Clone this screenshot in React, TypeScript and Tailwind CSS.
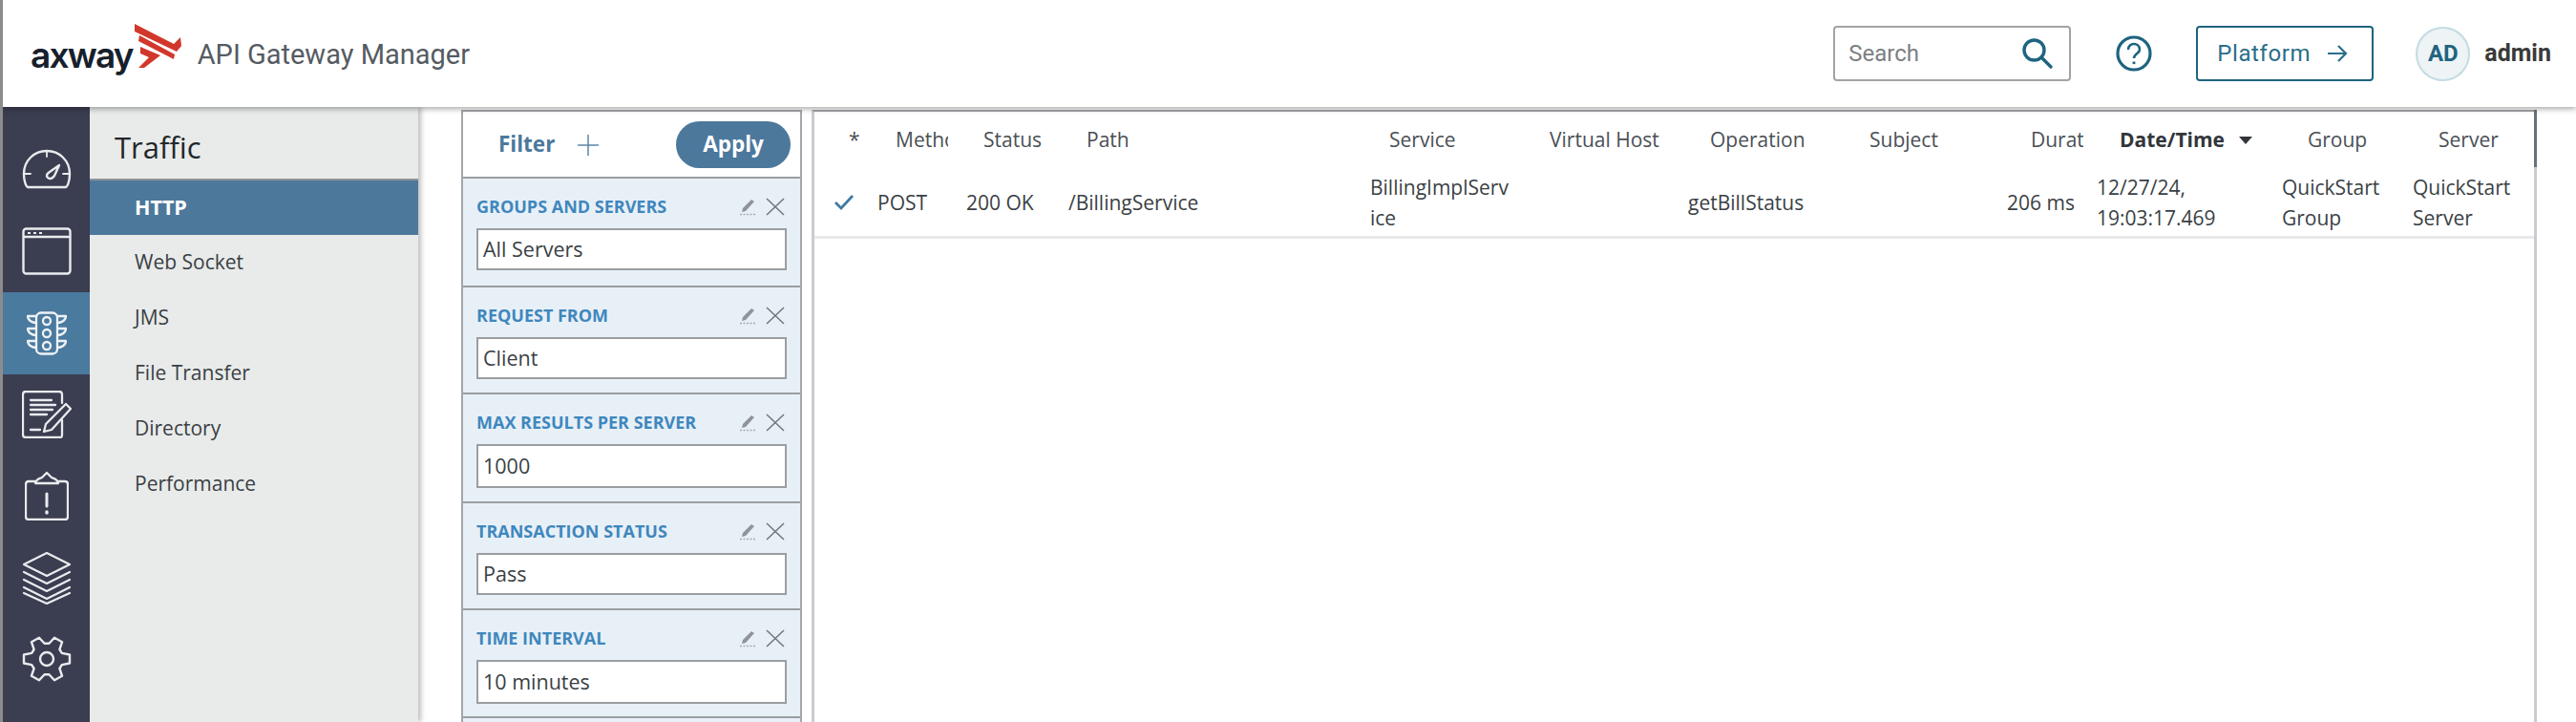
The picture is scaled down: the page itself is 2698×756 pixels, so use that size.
import React from "react";

const open = "font-['Open_Sans',sans-serif]";

function Gauge() {
  return (
    <svg width="52" height="42" viewBox="0 0 52 42" fill="none" stroke="#e9ebee" strokeWidth="2.4" strokeLinecap="round" strokeLinejoin="round">
      <path d="M6 40h40c2-1 4-7 4-14C50 12 39 2 26 2S2 12 2 26c0 7 2 13 4 14z" />
      <path d="M26 2v6M2 26h7M43 26h7" strokeWidth="1.8" />
      <path d="M39 17l-5 11c-2 3-5 4-7 2s-1-4 2-6z" />
    </svg>
  );
}
function Win() {
  return (
    <svg width="52" height="50" viewBox="0 0 52 50" fill="none" stroke="#e9ebee" strokeWidth="2.4" strokeLinejoin="round">
      <rect x="1.5" y="1.5" width="49" height="47" rx="3" />
      <path d="M2 10h48" />
      <path d="M6 6h3M12 6h3M18 6h3" strokeWidth="2" />
    </svg>
  );
}
function Light() {
  return (
    <svg width="42" height="46" viewBox="0 0 42 46" fill="none" stroke="#eef2f5" strokeWidth="2.3" strokeLinejoin="round">
      <rect x="10" y="1.5" width="22" height="43" rx="5" />
      <circle cx="21" cy="10" r="4" />
      <circle cx="21" cy="23" r="4" />
      <circle cx="21" cy="36" r="4" />
      <path d="M10 5H1c0 4 4 7 9 7M32 5h9c0 4-4 7-9 7M10 18H1c0 4 4 7 9 7M32 18h9c0 4-4 7-9 7M10 31H1c0 4 4 7 9 7M32 31h9c0 4-4 7-9 7" />
    </svg>
  );
}
function Notes() {
  return (
    <svg width="52" height="50" viewBox="0 0 52 50" fill="none" stroke="#e9ebee" strokeWidth="2.3" strokeLinejoin="round" strokeLinecap="round">
      <path d="M42 13V4c0-2-1-3-3-3H4C2 1 1 2 1 4v42c0 2 1 3 3 3h36c2 0 2-1 2-3V31" />
      <path d="M9 10h22M9 15h26M9 20h23M9 25h17M9 41h10" />
      <path d="M46 14l5 5-20 22-8 2 2-8z" />
    </svg>
  );
}
function Clip() {
  return (
    <svg width="46" height="52" viewBox="0 0 46 52" fill="none" stroke="#e9ebee" strokeWidth="2.3" strokeLinejoin="round" strokeLinecap="round">
      <path d="M11 11H4c-2 0-3 1-3 3v34c0 2 1 3 3 3h38c2 0 3-1 3-3V14c0-2-1-3-3-3h-7" />
      <path d="M11 13c1-5 5-5 7-6l5-5 5 5c2 1 6 1 7 6z" />
      <path d="M23 24v13" strokeWidth="3" />
      <path d="M23 43v1" strokeWidth="3.4" />
    </svg>
  );
}
function Layers() {
  return (
    <svg width="52" height="56" viewBox="0 0 52 56" fill="none" stroke="#e9ebee" strokeWidth="2.2" strokeLinejoin="round" strokeLinecap="round">
      <path d="M26 2l24 12-24 12L2 14z" />
      <path d="M2 22l24 12 24-12M2 30l24 12 24-12M2 38l24 12 24-12M2 44l24 11 24-11" />
    </svg>
  );
}
const gearPath = (() => {
  const p: string[] = [];
  const pt = (r: number, a: number) => {
    const t = (a * Math.PI) / 180;
    return `${(26 + r * Math.cos(t)).toFixed(1)} ${(24 + r * Math.sin(t) * 0.96).toFixed(1)}`;
  };
  for (let i = 0; i < 6; i++) {
    const a = i * 60;
    p.push(`${i === 0 ? "M" : "L"}${pt(17, a - 22)}`);
    p.push(`L${pt(24.5, a - 11)}`);
    p.push(`L${pt(24.5, a + 11)}`);
    p.push(`L${pt(17, a + 22)}`);
  }
  return p.join(" ") + "Z";
})();
function Gear() {
  return (
    <svg width="52" height="48" viewBox="0 0 52 48" fill="none" stroke="#e9ebee" strokeWidth="2.4" strokeLinejoin="round">
      <circle cx="26" cy="24" r="7" />
      <path d={gearPath} />
    </svg>
  );
}

function Pencil() {
  return (
    <svg width="19" height="18" viewBox="0 0 19 18" className="mt-[2px]">
      <path d="M13 1l3 2-9 10-4 1 1-4z" fill="#8f9499" />
      <path d="M1 16.5h17" stroke="#a7abaf" strokeWidth="1.4" strokeDasharray="2 1.5" />
    </svg>
  );
}
function Close() {
  return (
    <svg width="20" height="19" viewBox="0 0 20 19" fill="none" stroke="#73787c" strokeWidth="1.6">
      <path d="M1 1l18 17M19 1L1 18" />
    </svg>
  );
}

function Section({ label, value, h, ih }: { label: string; value: string; h: string; ih: string }) {
  return (
    <div className={`${h} shrink-0 bg-[#e8f0f7] border-b-2 border-[#9b9ea0] px-[14px] pt-[19px]`}>
      <div className="h-[33px] flex items-start justify-between pr-[2px]">
        <span className="text-[18px] leading-[20px] font-bold text-[#3f87bd] uppercase">{label}</span>
        <span className="flex items-center gap-[9px]">
          <Pencil />
          <Close />
        </span>
      </div>
      <div className={`${ih} bg-white border-2 border-[#9b9ea0] pl-[5px] flex items-center text-[21.5px] text-[#3a3f44]`}>{value}</div>
    </div>
  );
}

const navItems = ["Web Socket", "JMS", "File Transfer", "Directory", "Performance"];

export default function App() {
  return (
    <div className={`w-[2698px] h-[756px] overflow-hidden bg-white border-l-[3px] border-[#8c8c8c] flex flex-col ${open}`}>
      <header className="relative z-20 h-[112px] shrink-0 bg-white shadow-[0_2px_6px_rgba(0,0,0,0.35)] flex items-center">
        <div className="flex items-center pl-[29px]">
          <span className="font-['Inter',sans-serif] font-semibold text-[37px] leading-none tracking-[-1.8px] text-[#17202c] mt-[2px]">axway</span>
          <svg width="52" height="50" viewBox="0 0 52 50" className="ml-[1px] mt-[-14px]" fill="#d2372c">
            <path d="M1 1l41 21 7-7 1 9-5 6L1 9z" />
            <path d="M6 13l37 20-1 5L5 19z" />
            <path d="M7 25l21 9-17 13H5l11-11-9-4z" />
          </svg>
          <span className="font-['Roboto',sans-serif] text-[29px] text-[#555b62] ml-[15px] mt-[3px]">API Gateway Manager</span>
        </div>
        <div className="ml-auto flex items-center font-['Roboto',sans-serif]">
          <div className="w-[249px] h-[58px] border-2 border-[#a3a3a3] rounded-[4px] flex items-center pl-[14px] pr-[16px] justify-between">
            <span className="text-[24px] text-[#7b7f82]">Search</span>
            <svg width="34" height="34" viewBox="0 0 34 34" fill="none" stroke="#1e6480" strokeWidth="3.4" strokeLinecap="round">
              <circle cx="13.5" cy="13.5" r="10.5" />
              <path d="M21.5 21.5L31 31" />
            </svg>
          </div>
          <svg width="38" height="38" viewBox="0 0 38 38" fill="none" stroke="#1e6480" className="ml-[47px]">
            <circle cx="19" cy="19" r="17" strokeWidth="3.2" />
            <path d="M13 15c0-4 3-6 6-6s6 2 6 6c0 4-6 4-6 9" strokeWidth="2.6" />
            <path d="M19 27.5v2.6" strokeWidth="2.8" />
          </svg>
          <div className="ml-[46px] w-[186px] h-[58px] border-2 border-[#1e6480] rounded-[4px] flex items-center pl-[20px] text-[#2a6e8a]">
            <span className="text-[24px] tracking-[0.6px]">Platform</span>
            <svg width="22" height="20" viewBox="0 0 22 20" fill="none" stroke="#2a6e8a" strokeWidth="2.2" className="ml-[17px]">
              <path d="M1 10h19M12 2l8 8-8 8" />
            </svg>
          </div>
          <div className="ml-[44px] w-[57px] h-[57px] rounded-full bg-[#eef3f5] border-2 border-[#c3dbe3] flex items-center justify-center text-[24px] font-bold text-[#1e6480]">AD</div>
          <span className="ml-[15px] mr-[26px] text-[25px] font-bold text-[#3a3a3a]">admin</span>
        </div>
      </header>

      <div className="flex-1 flex min-h-0">
        <aside className="w-[91px] shrink-0 bg-[#3b3e50] pt-[22px] flex flex-col items-stretch">
          <div className="h-[86px] flex items-center justify-center"><Gauge /></div>
          <div className="h-[86px] flex items-center justify-center"><Win /></div>
          <div className="h-[86px] bg-[#4b7a9f] flex items-center justify-center"><Light /></div>
          <div className="h-[84px] flex items-center justify-center"><Notes /></div>
          <div className="h-[86px] flex items-center justify-center"><Clip /></div>
          <div className="h-[85px] flex items-center justify-center"><Layers /></div>
          <div className="h-[85px] flex items-center justify-center"><Gear /></div>
        </aside>

        <nav className="relative z-10 w-[344px] shrink-0 bg-[#e9ebea] shadow-[3px_0_5px_rgba(0,0,0,0.25)]">
          <div className="h-[75px] pl-[26px] pt-[19px] text-[31px] leading-[46px] text-[#23272b]">Traffic</div>
          <div className="h-[59px] bg-[#4c789c] border-t-2 border-[#8f9398] pl-[47px] flex items-center text-[21.5px] font-bold text-white">HTTP</div>
          <div>
            {navItems.map((n) => (
              <div key={n} className="h-[58px] pl-[47px] flex items-center text-[21px] text-[#3a3f44]">{n}</div>
            ))}
          </div>
        </nav>

        <main className="flex-1 flex pl-[45px] pt-[3px] gap-[10px] min-w-0 bg-white">
          <section className="w-[357px] shrink-0 h-[660px] border-x-2 border-t-2 border-[#a4a7aa] flex flex-col overflow-hidden">
            <div className="h-[70px] shrink-0 border-b-2 border-[#9b9ea0] flex items-center pl-[37px] pr-[10px]">
              <span className="text-[22.5px] font-bold text-[#4c789c]">Filter</span>
              <svg width="22" height="22" viewBox="0 0 22 22" fill="none" stroke="#5c86a8" strokeWidth="1.5" className="ml-[24px] mt-[2px]">
                <path d="M11 0v22M0 11h22" />
              </svg>
              <button className="ml-auto w-[120px] h-[49px] rounded-full bg-[#4c789c] text-white text-[22.5px] font-bold">Apply</button>
            </div>
            <Section label="Groups and Servers" value="All Servers" h="h-[114px]" ih="h-[44px]" />
            <Section label="Request From" value="Client" h="h-[112px]" ih="h-[44px]" />
            <Section label="Max Results Per Server" value="1000" h="h-[114px]" ih="h-[46px]" />
            <Section label="Transaction Status" value="Pass" h="h-[112px]" ih="h-[44px]" />
            <Section label="Time Interval" value="10 minutes" h="h-[113px]" ih="h-[46px]" />
            <div className="flex-1 bg-[#e8f0f7]" />
          </section>

          <section className="w-[1807px] shrink-0 h-[660px] relative border-l-[3px] border-r-[3px] border-[#c9ccd0] border-t-2 border-t-[#a4a7aa] text-[21px] text-[#3a3f44]">
            <div className="absolute right-[-3px] top-[-2px] w-[3px] h-[60px] bg-[#6b7079]" />
            <div className="h-[60px] flex items-center text-[#4a4f55] pl-[36px]">
              <div className="w-[49px]">*</div>
              <div className="w-[92px]"><div className="w-[55px] overflow-hidden whitespace-nowrap">Method</div></div>
              <div className="w-[108px]">Status</div>
              <div className="w-[317px]">Path</div>
              <div className="w-[168px]">Service</div>
              <div className="w-[168px]">Virtual Host</div>
              <div className="w-[167px]">Operation</div>
              <div className="w-[169px]">Subject</div>
              <div className="w-[93px]"><div className="w-[55px] overflow-hidden whitespace-nowrap">Duration</div></div>
              <div className="w-[197px] flex items-center font-bold text-[#32363b]">
                Date/Time
                <svg width="14" height="8" viewBox="0 0 14 8" className="ml-[15px]"><path d="M0 0h14L7 8z" fill="#32363b" /></svg>
              </div>
              <div className="w-[137px]">Group</div>
              <div>Server</div>
            </div>
            <div className="h-[73px] flex items-center border-b-[3px] border-[#e8e9ea] pl-[21px] leading-[32px]">
              <div className="w-[45px]">
                <svg width="20" height="16" viewBox="0 0 20 16" fill="none" stroke="#3f7ba3" strokeWidth="2.8"><path d="M1 8l6 6L19 1" /></svg>
              </div>
              <div className="w-[93px]">POST</div>
              <div className="w-[107px]">200 OK</div>
              <div className="w-[316px]">/BillingService</div>
              <div className="w-[333px]"><div className="w-[149px] break-all">BillingImplService</div></div>
              <div className="w-[334px]">getBillStatus</div>
              <div className="w-[94px]">206 ms</div>
              <div className="w-[194px]">12/27/24,<br />19:03:17.469</div>
              <div className="w-[137px]">QuickStart<br />Group</div>
              <div>QuickStart<br />Server</div>
            </div>
          </section>
        </main>
      </div>
    </div>
  );
}
